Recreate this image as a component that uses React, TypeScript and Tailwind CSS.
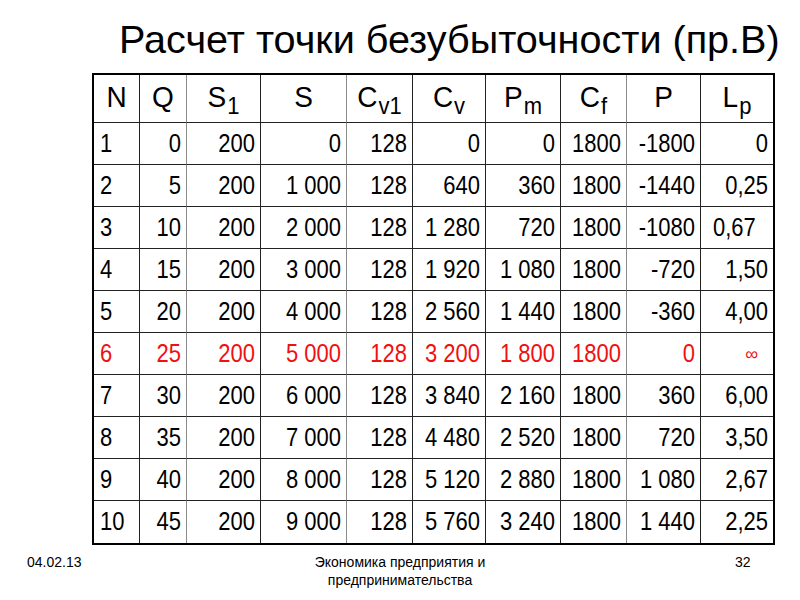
import React from "react";

type Row = { cells: string[]; red?: boolean };

const rows: Row[] = [
  { cells: ["1", "0", "200", "0", "128", "0", "0", "1800", "-1800", "0"] },
  { cells: ["2", "5", "200", "1 000", "128", "640", "360", "1800", "-1440", "0,25"] },
  { cells: ["3", "10", "200", "2 000", "128", "1 280", "720", "1800", "-1080", "0,67"] },
  { cells: ["4", "15", "200", "3 000", "128", "1 920", "1 080", "1800", "-720", "1,50"] },
  { cells: ["5", "20", "200", "4 000", "128", "2 560", "1 440", "1800", "-360", "4,00"] },
  { cells: ["6", "25", "200", "5 000", "128", "3 200", "1 800", "1800", "0", "∞"], red: true },
  { cells: ["7", "30", "200", "6 000", "128", "3 840", "2 160", "1800", "360", "6,00"] },
  { cells: ["8", "35", "200", "7 000", "128", "4 480", "2 520", "1800", "720", "3,50"] },
  { cells: ["9", "40", "200", "8 000", "128", "5 120", "2 880", "1800", "1 080", "2,67"] },
  { cells: ["10", "45", "200", "9 000", "128", "5 760", "3 240", "1800", "1 440", "2,25"] },
];

const rb = [
  "border-r border-r-[#222]",
  "border-r border-r-[#8a8a8a]",
  "border-r border-r-[#222]",
  "border-r border-r-[#8a8a8a]",
  "border-r border-r-[#222]",
  "border-r border-r-[#222]",
  "border-r border-r-[#222]",
  "border-r border-r-[#8a8a8a]",
  "border-r border-r-[#222]",
  "",
];

function Sub({ base, sub }: { base: string; sub: string }) {
  return (
    <span className="inline-flex items-start">
      <span>{base}</span>
      <span className="text-[22px] leading-none relative top-[15px] ml-[1px]">{sub}</span>
    </span>
  );
}

const headers: React.ReactNode[] = [
  "N",
  "Q",
  <Sub base="S" sub="1" />,
  "S",
  <Sub base="C" sub="v1" />,
  <Sub base="C" sub="v" />,
  <Sub base="P" sub="m" />,
  <Sub base="C" sub="f" />,
  "P",
  <Sub base="L" sub="p" />,
];

export default function App() {
  return (
    <div
      className="w-[800px] h-[600px] bg-white text-black relative overflow-hidden"
      style={{ fontFamily: '"Liberation Sans", Arial, sans-serif' }}
    >
      <div className="pt-[16px] pl-[119px] h-[73px]">
        <div className="text-[39.6px] leading-[46px] whitespace-nowrap">
          Расчет точки безубыточности (пр.В)
        </div>
      </div>
      <div className="ml-[92px] w-[683px] border-2 border-black">
        <div className="grid grid-cols-[46px_47px_74px_86px_66px_73px_75px_66px_74px_72px]">
          {headers.map((h, i) => (
            <div
              key={"h" + i}
              className={
                "h-[48px] border-b border-b-[#222] flex items-start justify-center pt-[5px] text-[28px] leading-[34px] " +
                rb[i]
              }
            >
              <span className="inline-block scale-y-[1.08]">{h}</span>
            </div>
          ))}
          {rows.map((r, ri) =>
            r.cells.map((c, ci) => {
              const last = ri === rows.length - 1;
              let align = "justify-end pr-[5px]";
              if (ci === 0) align = "justify-start pl-[6px]";
              if (ci === 9 && c === "0,67") align = "justify-start pl-[12px]";
              if (ci === 9 && c === "∞") align = "justify-end pr-[15px]";
              return (
                <div
                  key={ri + "-" + ci}
                  className={
                    "h-[42px] flex items-center text-[22px] leading-none " +
                    align +
                    " " +
                    rb[ci] +
                    (last ? "" : " border-b border-b-[#222]") +
                    (r.red ? " text-[#f01010]" : "")
                  }
                >
                  {c === "∞" ? (
                    <span className="text-[18px]">∞</span>
                  ) : (
                    <span className="inline-block scale-y-[1.15]">{c}</span>
                  )}
                </div>
              );
            })
          )}
        </div>
      </div>
      <div className="flex items-start mt-[8px] text-[14px] leading-[18px]">
        <div className="w-[140px] pl-[27px]">04.02.13</div>
        <div className="w-[520px] text-center">
          Экономика предприятия и
          <br />
          предпринимательства
        </div>
        <div className="pl-[75px]">32</div>
      </div>
    </div>
  );
}
